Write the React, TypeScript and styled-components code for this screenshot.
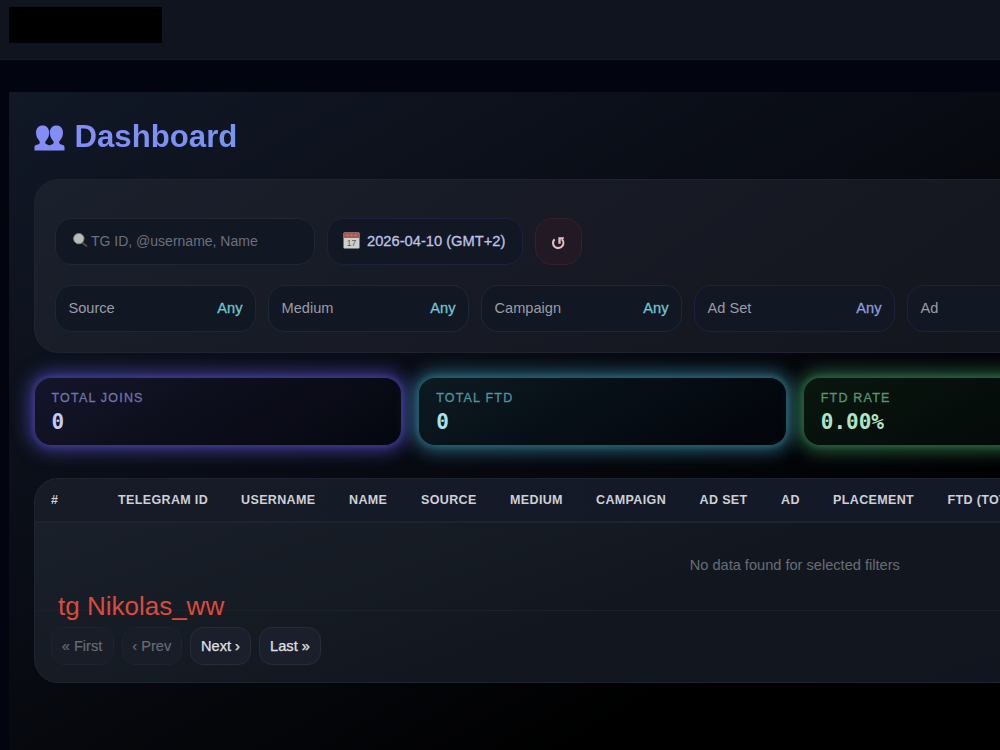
import React from "react";
import styled, { createGlobalStyle } from "styled-components";

const Global = createGlobalStyle`
  * { box-sizing: border-box; }
  body {
    margin: 0;
    background: #020410;
    overflow: hidden;
    font-family: "Liberation Sans", Arial, Helvetica, sans-serif;
    font-size: 14.6px;
  }
`;

const Page = styled.div`
  width: 1000px;
  height: 750px;
  overflow: hidden;
`;

const TopBar = styled.header`
  height: 60px;
  padding: 7px 9px;
  background: #10141f;
  border-bottom: 1px solid #141824;
`;

const Brand = styled.div`
  width: 153px;
  height: 36px;
  background: #000;
`;

const Shell = styled.main`
  width: 1572px;
  height: 700px;
  margin: 32px 0 0 9px;
  padding: 25px 25px 25px 24.5px;
  background: linear-gradient(150deg, #111826 0%, #090c14 33%, #000 62%);
`;

const Title = styled.h1`
  display: flex;
  align-items: center;
  gap: 10px;
  height: 38px;
  margin: 0 0 24px;
  padding-top: 1px;
  font-size: 31.2px;
  line-height: 38px;
  color: #818cf8;

  svg { margin-top: 3px; }
  span {
    background: linear-gradient(90deg, #848cf5, #7895f0);
    background-clip: text;
    -webkit-background-clip: text;
    color: transparent;
  }
`;

const Filters = styled.section`
  height: 174px;
  padding: 38px 20px 0;
  border: 1px solid #20232f;
  border-radius: 24px;
  background: linear-gradient(145deg, #1a202c 0%, #171a24 35%, #12151c 75%);
`;

const FilterRow = styled.div`
  display: flex;
  gap: 12px;
  margin-bottom: 20px;
`;

const Field = styled.div<{ $w: number; $line: string; $bg?: string; $pad?: string }>`
  display: flex;
  flex: none;
  align-items: center;
  width: ${(p) => p.$w}px;
  height: 47px;
  padding: ${(p) => p.$pad ?? "0 12px 2px 13px"};
  border: 1.5px solid ${(p) => p.$line};
  border-radius: 17px;
  background: ${(p) => p.$bg ?? "#111723"};
`;

const Placeholder = styled.span`
  margin-left: 3.5px;
  font-size: 14px;
  color: #6c707b;
`;

const DateText = styled.span`
  margin-left: 7.5px;
  color: #bfc2e6;
  font-size: 14.7px;
  -webkit-text-stroke: 0.3px #bfc2e6;
`;

const FieldName = styled.span`
  flex: 1;
  color: #9a9da5;
`;

const FieldValue = styled.span<{ $color: string }>`
  color: ${(p) => p.$color};
  -webkit-text-stroke: 0.3px ${(p) => p.$color};
`;

const Stats = styled.section`
  display: grid;
  grid-template-columns: repeat(4, 1fr);
  gap: 16px;
  margin: 24px 0 32px;
`;

const Stat = styled.div<{ $rgb: string; $bg: string; $label: string; $value: string }>`
  height: 69px;
  padding: 12px 17px;
  border: 1px solid rgba(${(p) => p.$rgb}, 0.6);
  border-radius: 17px;
  background: ${(p) => p.$bg};
  background-clip: padding-box;
  box-shadow: 0 0 5px 1px rgba(${(p) => p.$rgb}, 0.4), 0 0 18px 4px rgba(${(p) => p.$rgb}, 0.75);

  small {
    display: block;
    font-size: 12.5px;
    line-height: 16px;
    letter-spacing: 1.2px;
    color: ${(p) => p.$label};
    -webkit-text-stroke: 0.3px ${(p) => p.$label};
  }
  b {
    display: block;
    font: bold 21px/28px "DejaVu Sans Mono", monospace;
    margin-top: 2px;
    color: ${(p) => p.$value};
  }
`;

const TableCard = styled.section`
  height: 205px;
  border: 1px solid #1f2431;
  border-radius: 24px;
  overflow: hidden;
  background: linear-gradient(160deg, #1b212b 0%, #12171f 45%, #10141f 100%);
`;

const HeadRow = styled.div`
  display: grid;
  grid-template-columns: 67px 123px 108px 72px 89px 86px 103.5px 81.5px 52px 114.5px 200px;
  height: 44px;
  padding-left: 16.6px;
  border-bottom: 2px solid #1e242f;
  background: linear-gradient(90deg, #161b26, #141928 40%);
  font-size: 12.5px;
  font-weight: bold;
  line-height: 43px;
  letter-spacing: 0.35px;
  color: #ced0d5;
  white-space: nowrap;
`;

const EmptyRow = styled.div`
  height: 88px;
  border-bottom: 1px solid #1b212b;
  line-height: 85px;
  text-align: center;
  color: #696d76;
`;

const Pager = styled.nav`
  display: flex;
  gap: 8px;
  padding: 16px 16px;
`;

const PageButton = styled.button<{ $w: number }>`
  width: ${(p) => p.$w}px;
  height: 38px;
  padding: 0 0 1px;
  border: 1.5px solid #282c38;
  border-radius: 13px;
  background: #1b1f2b;
  font: inherit;
  color: #e0e2e7;
  -webkit-text-stroke: 0.25px #e0e2e7;

  &:disabled {
    border-color: #1e232e;
    background: #181d28;
    color: #676b74;
    -webkit-text-stroke: 0.2px #676b74;
  }
`;

const Note = styled.div`
  position: absolute;
  left: 58px;
  top: 591px;
  font-size: 26px;
  line-height: 30px;
  color: #dd4a3c;
`;

const People = () => (
  <svg width="31" height="26" viewBox="0 0 31 26" fill="#848cf5">
    <path d="M8.600.5C4.700.5 2 3.200 2 7.600c0 3.500 1.400 6.300 3.200 8.200 1 1.200.8 2.800-.6 3.400L2 20.100C.800 20.500.5 21.300.5 22.600v3h15.300V20.400l-3.200-1.100c-1.500-.6-1.700-2.200-.6-3.500 1.800-1.900 3.200-4.700 3.200-8.200C15.200 3.200 12.500.5 8.600.5Z" />
    <path d="M22.400.5c3.900 0 6.600 2.700 6.600 7.100 0 3.500-1.400 6.300-3.200 8.200-1 1.200-.8 2.800.6 3.400l2.600.9c1.200.4 1.500 1.200 1.500 2.500v3H15.200V20.400l3.200-1.100c1.500-.6 1.700-2.200.6-3.500-1.800-1.900-3.200-4.700-3.200-8.200C15.800 3.200 18.500.5 22.400.5Z" />
  </svg>
);

const Magnifier = () => (
  <svg width="16" height="16" viewBox="0 0 16 16">
    <path d="M10 9.500 14.500 13" stroke="#4c4c4f" strokeWidth="2" strokeLinecap="round" />
    <circle cx="6.800" cy="5.600" r="5.200" fill="#b9bbbd" stroke="#85888c" strokeWidth="0.900" />
  </svg>
);

const Calendar = () => (
  <svg width="17" height="17" viewBox="0 0 17 17">
    <rect x="0.500" y="0.500" width="16" height="16" rx="1" fill="#cfd0d0" />
    <path d="M.5 1.500a1 1 0 0 1 1-1h14a1 1 0 0 1 1 1V6H.5Z" fill="#a95852" />
    <path d="M3.500 3.200h2M7.500 3.200h2M11.500 3.200h2" stroke="#c98a84" strokeWidth="1" />
    <text x="8.500" y="14.200" textAnchor="middle" fontSize="8.500" fill="#55585c" fontFamily="Liberation Sans">17</text>
  </svg>
);

const Reset = () => (
  <svg width="15" height="14" viewBox="0 0 15 14" fill="none" stroke="#e3bcc3">
    <path d="M3.600 3.200C1.300 5.600 1.700 9 3.700 10.800 6 12.700 9.500 12.500 11.300 10.200 12.900 8.100 12.700 5.100 10.800 3.300" strokeWidth="2.100" />
    <path d="M7.300 1.300H13L12.700 3 9.700 3.600V7.800H7.300Z" fill="#e3bcc3" stroke="none" />
  </svg>
);

const TEAL = "#172b37";
const INDIGO = "#1e2040";
const FIELDS = [
  ["Source", TEAL, "#70c4d4"],
  ["Medium", TEAL, "#70c4d4"],
  ["Campaign", TEAL, "#70c4d4"],
  ["Ad Set", INDIGO, "#9298dc"],
  ["Ad", INDIGO, "#9298dc"],
];

const STATS = [
  { name: "TOTAL JOINS", value: "0", rgb: "82,76,190", bg: "linear-gradient(150deg,#15152b,#0e0f1d 40%,#05070f)", label: "#7073ab", val: "#c5cbf5" },
  { name: "TOTAL FTD", value: "0", rgb: "55,135,160", bg: "linear-gradient(150deg,#0d1a22,#070f16 45%,#02040a)", label: "#4f949f", val: "#a9e3ed" },
  { name: "FTD RATE", value: "0.00%", rgb: "57,135,90", bg: "linear-gradient(150deg,#09170f,#050d0a 45%,#020504)", label: "#559673", val: "#aee5c4" },
];

const COLUMNS = ["#", "TELEGRAM ID", "USERNAME", "NAME", "SOURCE", "MEDIUM", "CAMPAIGN", "AD SET", "AD", "PLACEMENT", "FTD (TOTAL)"];

export default function App() {
  return (
    <Page>
      <Global />
      <TopBar>
        <Brand />
      </TopBar>
      <Shell>
        <Title>
          <People />
          <span>Dashboard</span>
        </Title>
        <Filters>
          <FilterRow>
            <Field $w={260} $line="#222631" $pad="0 16px 2px">
              <Magnifier />
              <Placeholder>TG ID, @username, Name</Placeholder>
            </Field>
            <Field $w={196} $line={INDIGO} $pad="0 15px 2px">
              <Calendar />
              <DateText>2026-04-10 (GMT+2)</DateText>
            </Field>
            <Field $w={47} $line="#3b1e2b" $bg="#211923" $pad="2px 0 0 15px">
              <Reset />
            </Field>
          </FilterRow>
          <FilterRow>
            {FIELDS.map(([name, line, color]) => (
              <Field key={name} $w={201} $line={line}>
                <FieldName>{name}</FieldName>
                <FieldValue $color={color}>Any</FieldValue>
              </Field>
            ))}
          </FilterRow>
        </Filters>
        <Stats>
          {STATS.map((s) => (
            <Stat key={s.name} $rgb={s.rgb} $bg={s.bg} $label={s.label} $value={s.val}>
              <small>{s.name}</small>
              <b>{s.value}</b>
            </Stat>
          ))}
        </Stats>
        <TableCard>
          <HeadRow>
            {COLUMNS.map((c) => (
              <span key={c}>{c}</span>
            ))}
          </HeadRow>
          <EmptyRow>No data found for selected filters</EmptyRow>
          <Pager>
            <PageButton $w={63} disabled>« First</PageButton>
            <PageButton $w={60.5} disabled>‹ Prev</PageButton>
            <PageButton $w={61}>Next ›</PageButton>
            <PageButton $w={62}>Last »</PageButton>
          </Pager>
        </TableCard>
      </Shell>
      <Note>tg Nikolas_ww</Note>
    </Page>
  );
}
